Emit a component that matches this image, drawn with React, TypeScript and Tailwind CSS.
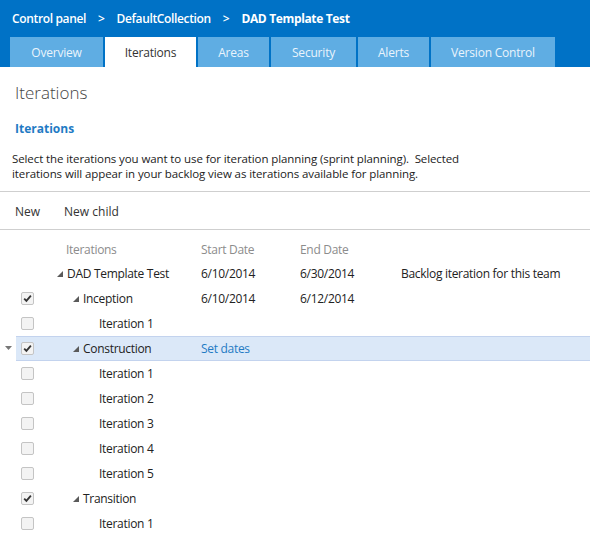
import React from 'react';

type Row = {
  name: string;
  level: number;
  expandable?: boolean;
  checkbox?: boolean;
  checked?: boolean;
  start?: string;
  end?: string;
  note?: string;
  setDates?: boolean;
  selected?: boolean;
};

const rows: Row[] = [
  { name: 'DAD Template Test', level: 0, expandable: true, start: '6/10/2014', end: '6/30/2014', note: 'Backlog iteration for this team' },
  { name: 'Inception', level: 1, expandable: true, checkbox: true, checked: true, start: '6/10/2014', end: '6/12/2014' },
  { name: 'Iteration 1', level: 2, checkbox: true },
  { name: 'Construction', level: 1, expandable: true, checkbox: true, checked: true, setDates: true, selected: true },
  { name: 'Iteration 1', level: 2, checkbox: true },
  { name: 'Iteration 2', level: 2, checkbox: true },
  { name: 'Iteration 3', level: 2, checkbox: true },
  { name: 'Iteration 4', level: 2, checkbox: true },
  { name: 'Iteration 5', level: 2, checkbox: true },
  { name: 'Transition', level: 1, expandable: true, checkbox: true, checked: true },
  { name: 'Iteration 1', level: 2, checkbox: true },
];

const tabs = [
  { label: 'Overview', w: 'w-[93px]' },
  { label: 'Iterations', w: 'w-[91px]', active: true },
  { label: 'Areas', w: 'w-[71px]' },
  { label: 'Security', w: 'w-[85px]' },
  { label: 'Alerts', w: 'w-[71px]' },
  { label: 'Version Control', w: 'w-[124px]' },
];

const Expander: React.FC = () => (
  <svg width="6" height="6" viewBox="0 0 6 6" className="shrink-0">
    <polygon points="6,0 6,6 0,6" fill="#5a5a5a" />
  </svg>
);

const Checkbox: React.FC<{ checked?: boolean }> = ({ checked }) => (
  <div className="w-[13px] h-[13px] rounded-[2px] border border-[#c4c4c4] bg-[#f3f3f3] flex items-center justify-center">
    {checked && (
      <svg width="9" height="9" viewBox="0 0 9 9">
        <path d="M1.2 4.6 L3.4 6.9 L7.9 1.6" stroke="#333" strokeWidth="1.8" fill="none" />
      </svg>
    )}
  </div>
);

const App: React.FC = () => {
  return (
    <div className="w-[590px] h-[554px] overflow-hidden bg-white text-[12px] text-[#222]" style={{ fontFamily: '"Open Sans", "Noto Sans", sans-serif' }}>
      <header className="bg-[#0072c6] text-white h-[67px] flex flex-col">
        <div className="h-[37px] flex items-center pl-[12px] gap-[12px] font-semibold text-[12px] tracking-[-0.35px]">
          <span>Control panel</span>
          <span>&gt;</span>
          <span>DefaultCollection</span>
          <span>&gt;</span>
          <span className="font-bold">DAD Template Test</span>
        </div>
        <nav className="flex pl-[10px] gap-[2px] h-[30px]">
          {tabs.map((t) => (
            <div
              key={t.label}
              className={`${t.w} h-full flex items-center justify-center pt-[1px] text-[12px] tracking-[-0.2px] ${t.active ? 'bg-white text-[#333]' : 'bg-[#5fade3] text-[#eaf4fc]'}`}
            >
              {t.label}
            </div>
          ))}
        </nav>
      </header>

      <div className="pl-[15px] pt-[14px] text-[17px] font-light text-[#444] leading-[24px]">Iterations</div>
      <div className="pl-[15px] pt-[16px] text-[12px] font-bold text-[#1f7bc4] leading-[16px]">Iterations</div>
      <p className="pl-[12px] pt-[14px] w-[490px] text-[11.5px] leading-[15px] tracking-[-0.1px]">
        Select the iterations you want to use for iteration planning (sprint planning).&nbsp; Selected iterations will appear in your backlog view as iterations available for planning.
      </p>

      <div className="mt-[10px] border-t border-[#cfcfcf]" />
      <div className="h-[37px] flex items-center gap-[24px] pl-[15px] pt-[2px] text-[12px] text-[#333]">
        <span>New</span>
        <span>New child</span>
      </div>
      <div className="border-t border-[#cfcfcf]" />

      <div className="pt-[8px] tracking-[-0.3px]">
        <div className="h-[23px] flex items-center text-[#8c8c8c]">
          <div className="w-[66px] shrink-0" />
          <div className="w-[135px] shrink-0">Iterations</div>
          <div className="w-[99px] shrink-0">Start Date</div>
          <div>End Date</div>
        </div>
        {rows.map((r, i) => (
          <div key={i} className="h-[25px] flex items-center">
            <div className="w-[16px] shrink-0 flex justify-center">
              {r.selected && (
                <svg width="7" height="5" viewBox="0 0 7 5">
                  <polygon points="0,0 7,0 3.5,4" fill="#777" />
                </svg>
              )}
            </div>
            <div
              className={`flex-1 h-full flex items-center ${r.selected ? 'bg-[#dbe8f8] border-y border-[#c3d3ee]' : ''}`}
            >
              <div className="w-[5px] shrink-0" />
              <div className="w-[13px] shrink-0">{r.checkbox && <Checkbox checked={r.checked} />}</div>
              <div className="w-[167px] shrink-0 flex items-center" style={{ paddingLeft: 23 + r.level * 16 }}>
                <div className="w-[10px] shrink-0 flex items-center">{r.expandable && <Expander />}</div>
                <span className="whitespace-nowrap">{r.name}</span>
              </div>
              {r.setDates ? (
                <div className="text-[#1f7bc4]">Set dates</div>
              ) : (
                <>
                  <div className="w-[99px] shrink-0">{r.start}</div>
                  <div className="w-[101px] shrink-0">{r.end}</div>
                  <div className="whitespace-nowrap">{r.note}</div>
                </>
              )}
            </div>
          </div>
        ))}
      </div>
    </div>
  );
};

export default App;
